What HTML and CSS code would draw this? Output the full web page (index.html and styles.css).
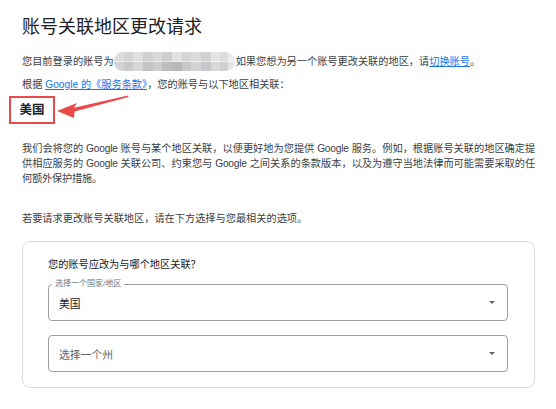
FILE: index.html
```
<!DOCTYPE html>
<html>

<head>
    <meta name="viewport" content="width=device-width, initial-scale=1.0">
    <title>账号关联地区更改请求</title>
    <link rel="stylesheet" href="styles.css">
</head>

<body>
    <main class="page">
        <h1 class="title">账号关联地区更改请求</h1>

        <p class="intro">您目前登录的账号为<span class="masked"></span>如果您想为另一个账号更改关联的地区，请<a href="#">切换账号</a>。</p>
        <p class="terms">根据 <a href="#">Google 的《服务条款》</a>，您的账号与以下地区相关联：</p>

        <div class="current-region">
            <span class="region-box">美国</span>
            <!-- annotation arrow pointing at the region -->
            <svg class="callout" width="76" height="28" viewBox="0 0 76 28">
                <polygon points="1,17 21,9 18,13.8 72,1.4 72.6,3 18.6,17.6 18,24" fill="#eb4a4a" />
            </svg>
        </div>

        <p class="explain">我们会将您的 Google 账号与某个地区关联，以便更好地为您提供 Google 服务。例如，根据账号关联的地区确定提供相应服务的 Google 关联公司、约束您与 Google 之间关系的条款版本，以及为遵守当地法律而可能需要采取的任何额外保护措施。</p>

        <p class="ask">若要请求更改账号关联地区，请在下方选择与您最相关的选项。</p>

        <section class="card">
            <p class="question">您的账号应改为与哪个地区关联？</p>
            <div class="field">
                <span class="field-label">选择一个国家/地区</span>
                <span class="field-value">美国</span>
                <span class="caret"></span>
            </div>
            <div class="field">
                <span class="field-value placeholder">选择一个州</span>
                <span class="caret"></span>
            </div>
        </section>
    </main>
</body>

</html>
```

FILE: styles.css
```
* {
    box-sizing: border-box;
}

body {
    margin: 0;
    background: #fff;
    color: #3c4043;
    font-family: "Liberation Sans", "Noto Sans CJK SC", sans-serif;
    font-size: 10.2px;
}

a {
    color: #1a73e8;
}

.page {
    padding: 15px 21px 0 22px;
}

.title {
    margin: 0;
    font-size: 18px;
    font-weight: 400;
    line-height: 24px;
    color: #202124;
}

.intro {
    margin: 13px 0 0;
    line-height: 19px;
}

/* blurred out e-mail address */
.masked {
    display: inline-block;
    vertical-align: top;
    width: 121px;
    height: 19px;
    margin: 0 1px 0 0;
    border-radius: 9px;
    background:
        linear-gradient(90deg, #dcdcdc 0 8%, #d3d3d3 8% 16%, #e0e0e0 16% 24%, #d0d0d0 24% 32%, #d9d9d9 32% 40%, #cecece 40% 48%, #e2e2e2 48% 56%, #d6d6d6 56% 64%, #dbdbdb 64% 72%, #d0d1d4 72% 80%, #e5e5e5 80% 88%, #dcdcdc 88% 94%, #ededed 94% 100%) top / 100% 50% no-repeat,
        linear-gradient(90deg, #d2d2d2 0 8%, #c9c9c9 8% 16%, #d6d6d6 16% 24%, #c4c4c4 24% 32%, #cdcdcd 32% 40%, #bdbdbd 40% 48%, #b8b8b8 48% 56%, #c8c8c8 56% 64%, #d3d3d3 64% 72%, #c6c7ca 72% 80%, #d9d9d9 80% 88%, #d0d0d0 88% 94%, #e4e4e4 94% 100%) bottom / 100% 50% no-repeat;
}

.terms {
    margin: 6px 0 0;
    line-height: 15px;
}

.current-region {
    position: relative;
    margin-top: 4px;
    height: 28px;
}

.region-box {
    display: inline-block;
    margin-left: -13px;
    width: 46px;
    height: 28px;
    border: 2px solid #eb4a4a;
    font-size: 12.5px;
    font-weight: bold;
    line-height: 24px;
    text-align: center;
    color: #202124;
}

.callout {
    position: absolute;
    left: 34px;
    top: -2px;
}

.explain {
    margin: 17px 0 0;
    line-height: 15px;
    letter-spacing: -0.2px;
    text-align: justify;
}

.ask {
    margin: 25px 0 0;
    line-height: 15px;
}

.card {
    margin-top: 15px;
    padding: 15px 26px 15px 25px;
    border: 1px solid #dadce0;
    border-radius: 8px;
}

.question {
    margin: 0;
    line-height: 15px;
    color: #202124;
}

.field {
    position: relative;
    display: flex;
    align-items: center;
    justify-content: space-between;
    height: 37px;
    margin-top: 12px;
    padding: 0 12px 0 10px;
    border: 1px solid #9e9e9e;
    border-radius: 4px;
}

.field + .field {
    margin-top: 14px;
}

.field-label {
    position: absolute;
    left: 3px;
    top: -6px;
    padding: 0 3px;
    background: #fff;
    font-size: 8px;
    line-height: 10px;
    color: #70757a;
}

.field-value {
    font-size: 10.8px;
    color: #202124;
}

.field-value.placeholder {
    color: #5f6368;
}

.caret {
    width: 0;
    height: 0;
    border-left: 3.5px solid transparent;
    border-right: 3.5px solid transparent;
    border-top: 3.5px solid #5f6368;
}
```
